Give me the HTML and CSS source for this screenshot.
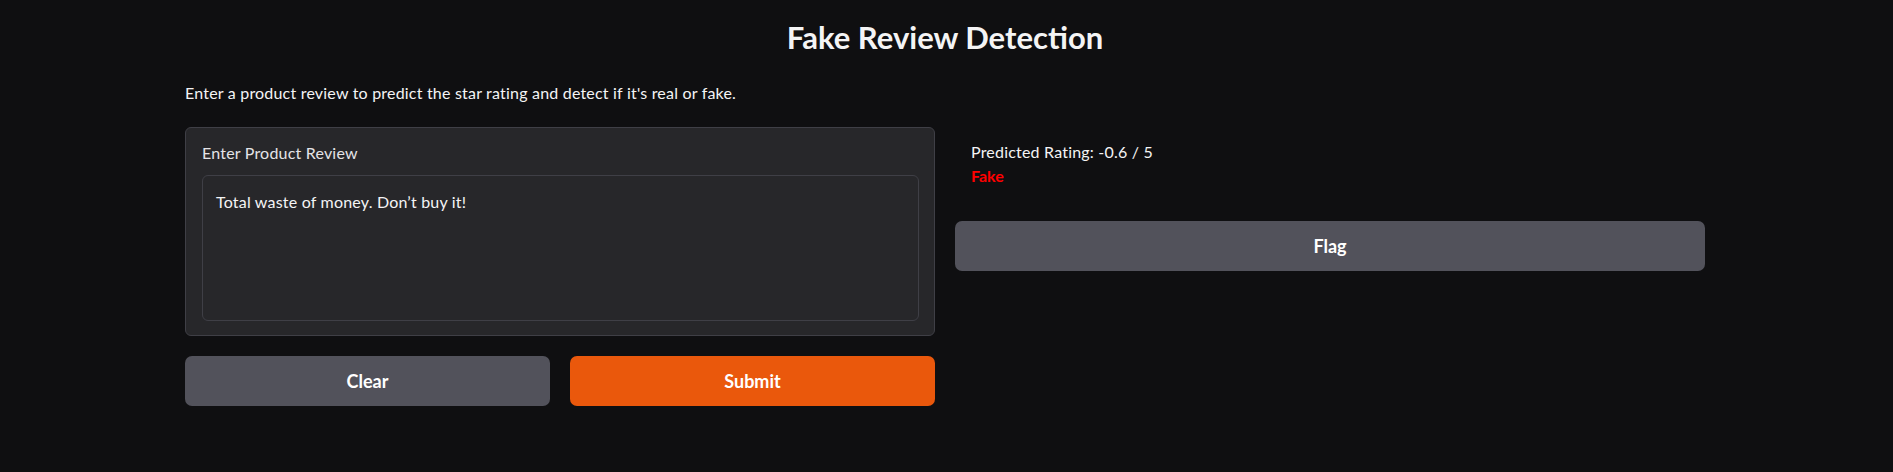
FILE: index.html
```html
<!DOCTYPE html>
<html lang="en">
<head>
<meta charset="utf-8">
<title>Fake Review Detection</title>
<link rel="stylesheet" href="styles.css">
</head>
<body>
<main class="app">
  <h1 class="title">Fake Review Detection</h1>
  <p class="desc">Enter a product review to predict the star rating and detect if it's real or fake.</p>
  <div class="row">
    <div class="col">
      <div class="block">
        <label class="label" for="review">Enter Product Review</label>
        <textarea id="review" class="textarea" rows="6">Total waste of money. Don’t buy it!</textarea>
      </div>
      <div class="btn-row">
        <button class="btn btn-secondary">Clear</button>
        <button class="btn btn-primary">Submit</button>
      </div>
    </div>
    <div class="col">
      <div class="output">
        <div class="rating">Predicted Rating: -0.6 / 5</div>
        <div class="verdict">Fake</div>
      </div>
      <button class="btn btn-secondary">Flag</button>
    </div>
  </div>
</main>
</body>
</html>
```

FILE: styles.css
```css
* { box-sizing: border-box; }
html, body {
  margin: 0;
  background: #0f0f11;
  color: #f4f4f5;
  font-family: Lato, "Open Sans", sans-serif;
}
.app {
  width: 1520px;
  margin-left: 185px;
  padding-top: 17px;
}
.title {
  margin: 0;
  text-align: center;
  font-size: 31px;
  line-height: 40px;
  font-weight: 700;
}
.desc {
  margin: 26px 0 0;
  font-size: 16px;
  line-height: 20px;
  letter-spacing: 0.2px;
}
.row {
  display: flex;
  gap: 20px;
  margin-top: 24px;
}
.col {
  flex: 1 1 0;
  display: flex;
  flex-direction: column;
  gap: 20px;
}
.block {
  background: #27272a;
  border: 1px solid #3f3f46;
  border-radius: 6px;
  padding: 15px 15px 14px 16px;
  display: flex;
  flex-direction: column;
  gap: 12px;
}
.label {
  font-size: 16px;
  line-height: 20px;
  color: #e4e4e7;
  letter-spacing: 0.2px;
}
.textarea {
  display: block;
  width: 100%;
  height: 146px;
  resize: none;
  background: #27272a;
  border: 1px solid #3f3f46;
  border-radius: 6px;
  color: #f4f4f5;
  font-family: inherit;
  font-size: 16px;
  line-height: 22px;
  letter-spacing: 0.2px;
  padding: 15px 13px;
  outline: none;
}
.btn-row {
  display: flex;
  gap: 20px;
}
.btn {
  flex: 1 1 0;
  height: 50px;
  border: none;
  border-radius: 7px;
  font-family: inherit;
  font-size: 18px;
  font-weight: 700;
  color: #ffffff;
  cursor: pointer;
}
.btn-secondary { background: #52525b; }
.btn-primary { background: #ea580c; }
.col > .btn { flex: none; width: 100%; }
.output {
  padding: 15px 16px 0;
  height: 74px;
}
.rating {
  font-size: 16px;
  line-height: 20px;
  letter-spacing: 0.2px;
}
.verdict {
  margin-top: 4px;
  font-size: 16px;
  line-height: 20px;
  font-weight: 700;
  color: #ff0000;
}
```
